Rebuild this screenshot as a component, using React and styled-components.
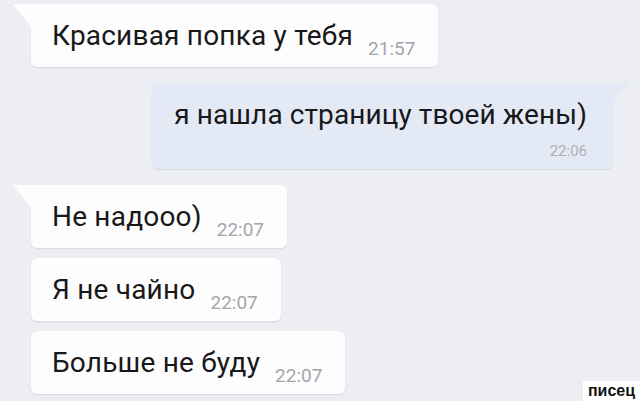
import React from "react";
import styled, { createGlobalStyle } from "styled-components";

const Global = createGlobalStyle`
  html, body { margin: 0; padding: 0; }
  body {
    background: #edeef4;
    font-family: Roboto, "Noto Sans", "Liberation Sans", sans-serif;
    -webkit-font-smoothing: antialiased;
  }
`;

const Screen = styled.div`
  position: relative;
  width: 640px;
  height: 401px;
  overflow: hidden;
  background: #edeef4;
  box-sizing: border-box;
  padding-top: 4px;
  display: flex;
  flex-direction: column;
  gap: 16px;
`;

const Group = styled.div`
  display: flex;
  flex-direction: column;
  align-items: ${(p) => (p.$out ? "flex-end" : "flex-start")};
  gap: 10px;
`;

const Bubble = styled.div`
  position: relative;
  display: flex;
  align-items: flex-start;
  box-sizing: border-box;
  height: 63px;
  margin-left: 31px;
  padding: 15px 23px 9px 21px;
  background: #fdfdfe;
  border-radius: ${(p) => (p.$tail ? "0 6px 6px 6px" : "6px")};
  box-shadow: 0 1px 1.5px rgba(60, 70, 100, 0.13);

  &::before {
    content: "";
    display: ${(p) => (p.$tail ? "block" : "none")};
    position: absolute;
    left: -18px;
    top: 0;
    width: 19px;
    height: 24px;
    background: #fdfdfe;
    clip-path: polygon(0 0, 100% 0, 100% 100%);
  }
`;

const OutBubble = styled.div`
  position: relative;
  display: flex;
  flex-direction: column;
  align-items: flex-end;
  box-sizing: border-box;
  height: 86px;
  margin-right: 28px;
  padding: 15px 25px 10px 22px;
  background: #e4eaf5;
  border-radius: 6px 0 6px 6px;
  box-shadow: 0 1px 1.5px rgba(60, 70, 100, 0.13);

  &::before {
    content: "";
    position: absolute;
    right: -18px;
    top: 0;
    width: 19px;
    height: 20px;
    background: #e4eaf5;
    clip-path: polygon(0 0, 100% 0, 0 100%);
  }
`;

const Text = styled.span`
  font-size: 28px;
  line-height: 34px;
  letter-spacing: 0.2px;
  color: #18181a;
  white-space: nowrap;
  padding-bottom: 5px;
`;

const OutText = styled.span`
  font-size: 28px;
  line-height: 34px;
  letter-spacing: 0.1px;
  color: #18181a;
  white-space: nowrap;
`;

const Time = styled.span`
  align-self: flex-end;
  margin-left: 15px;
  font-size: 19px;
  line-height: 18px;
  color: #a4a5ab;
  white-space: nowrap;
`;

const OutTime = styled.span`
  margin-top: 11px;
  font-size: 15px;
  line-height: 16px;
  color: #aeb0b8;
  white-space: nowrap;
`;

const Watermark = styled.div`
  position: absolute;
  right: 0;
  bottom: 0;
  width: 57px;
  height: 20px;
  background: #ffffff;
  display: flex;
  align-items: center;
  justify-content: center;
  font-family: "Liberation Sans", Arial, sans-serif;
  font-size: 16px;
  font-weight: 700;
  color: #111;
  line-height: 20px;
`;

const incoming = (text, time, tail) => (
  <Bubble $tail={tail}>
    <Text>{text}</Text>
    <Time>{time}</Time>
  </Bubble>
);

export default function App() {
  return (
    <>
      <Global />
      <Screen>
        <Group>{incoming("Красивая попка у тебя", "21:57", true)}</Group>
        <Group $out>
          <OutBubble>
            <OutText>я нашла страницу твоей жены)</OutText>
            <OutTime>22:06</OutTime>
          </OutBubble>
        </Group>
        <Group>
          {incoming("Не надооо)", "22:07", true)}
          {incoming("Я не чайно", "22:07", false)}
          {incoming("Больше не буду", "22:07", false)}
        </Group>
        <Watermark>писец</Watermark>
      </Screen>
    </>
  );
}
